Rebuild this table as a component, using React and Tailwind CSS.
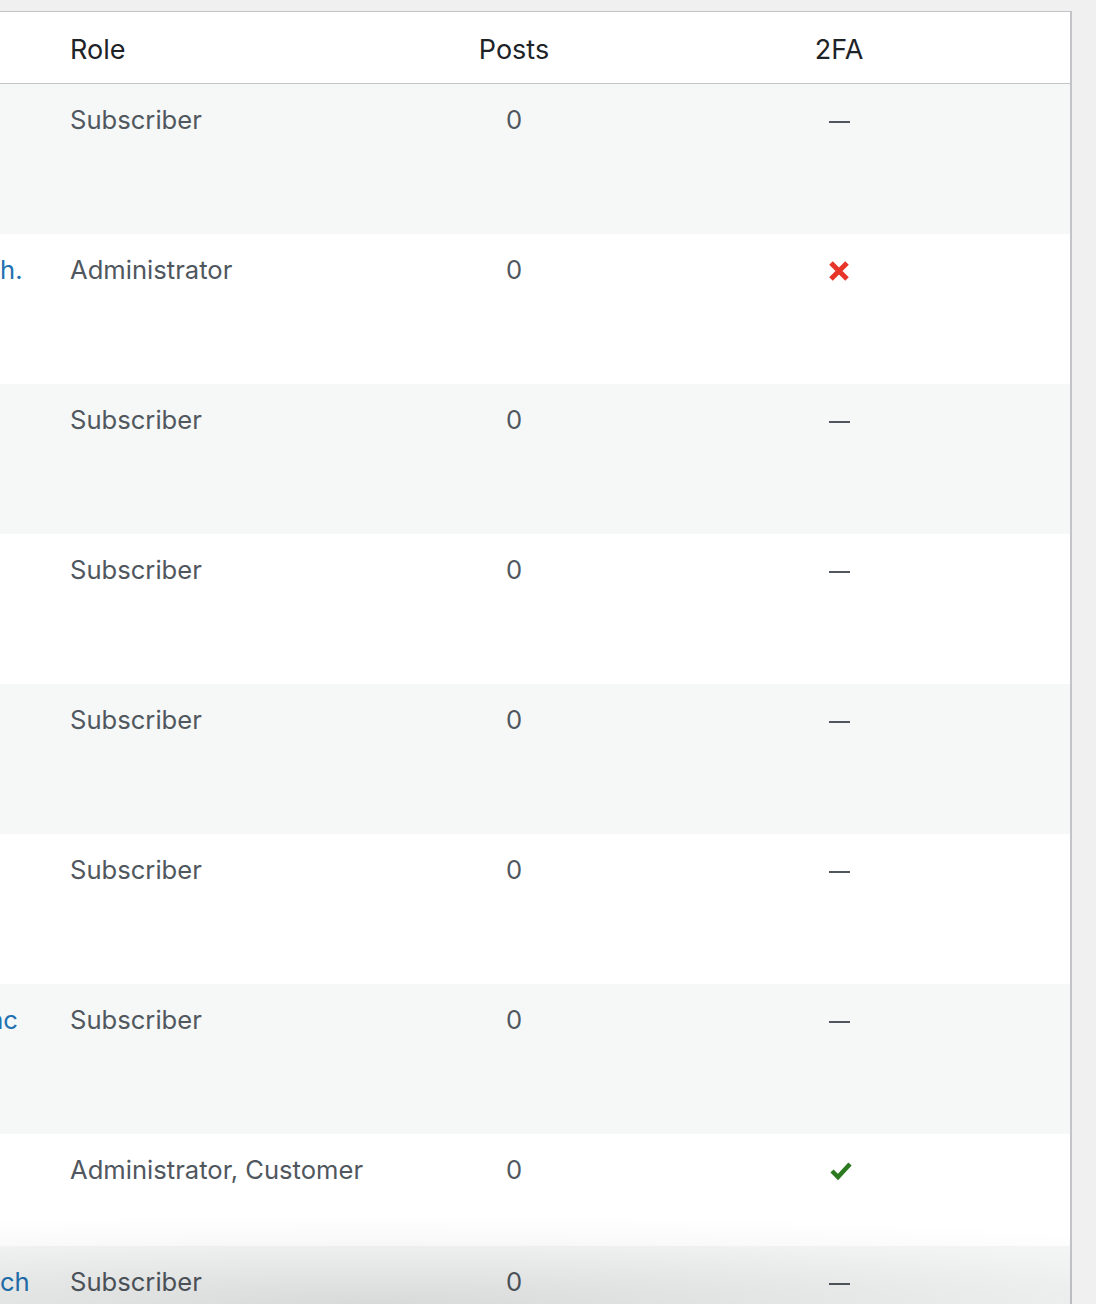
import React from 'react';

const rows = [
  { name: '', role: 'Subscriber', posts: '0', tfa: 'none', h: 'h-[150px]' },
  { name: 'h.', role: 'Administrator', posts: '0', tfa: 'off', h: 'h-[150px]' },
  { name: '', role: 'Subscriber', posts: '0', tfa: 'none', h: 'h-[150px]' },
  { name: '', role: 'Subscriber', posts: '0', tfa: 'none', h: 'h-[150px]' },
  { name: '', role: 'Subscriber', posts: '0', tfa: 'none', h: 'h-[150px]' },
  { name: '', role: 'Subscriber', posts: '0', tfa: 'none', h: 'h-[150px]' },
  { name: 'ac', shift: true, role: 'Subscriber', posts: '0', tfa: 'none', h: 'h-[150px]' },
  { name: '', role: 'Administrator, Customer', posts: '0', tfa: 'on', h: 'h-[112px]' },
  { name: 'ch', role: 'Subscriber', posts: '0', tfa: 'none', h: 'h-[150px]' }
];

function TwoFA({ state }) {
  if (state === 'off') {
    return (
      <svg width="22" height="22" viewBox="0 0 22 22" className="inline-block align-middle -mt-[3px]">
        <path d="M3 3 L19 19 M19 3 L3 19" stroke="#e8352a" strokeWidth="5" strokeLinecap="butt" />
      </svg>
    );
  }
  if (state === 'on') {
    return (
      <svg width="22" height="20" viewBox="0 0 22 20" className="inline-block align-middle -mt-[3px] ml-[3px]">
        <path d="M2 10 L8 16 L20 3" stroke="#2c7a1f" strokeWidth="4.5" fill="none" />
      </svg>
    );
  }
  return <span className="inline-block w-[21px] h-[2px] bg-[#50575e] align-middle -mt-[1px]" aria-hidden="true" />;
}

export default function App() {
  return (
    <div className="relative h-[1304px] overflow-hidden bg-[#f0f0f1] pt-[11px] font-['Inter',sans-serif]">
      <div className="w-[1072px] border-t border-r-2 border-[#c3c4c7] bg-white">
        {/* header */}
        <div className="flex h-[72px] border-b border-[#c3c4c7] text-[27px] leading-[39px] text-[#1d2327]">
          <div className="w-[54px]" />
          <div className="w-[374px] px-[16px] pt-[18px]">Role</div>
          <div className="w-[172px] pt-[18px] text-center">Posts</div>
          <div className="flex-1 pl-[8px] pt-[18px] text-center">2FA</div>
        </div>

        {rows.map((row, i) => (
          <div
            key={i}
            className={`flex ${row.h} text-[25.6px] leading-[39px] text-[#50575e] ${i % 2 === 0 ? 'bg-[#f6f7f7]' : 'bg-white'}`}
          >
            <div className="w-[54px] overflow-hidden pt-[16px]">
              <span className={`block whitespace-nowrap text-[#2271b1] ${row.shift ? '-ml-[11px]' : ''}`}>
                {row.name}
              </span>
            </div>
            <div className="w-[374px] px-[16px] pt-[16px] whitespace-nowrap">{row.role}</div>
            <div className="w-[172px] pt-[16px] text-center">{row.posts}</div>
            <div className="flex-1 pl-[8px] pt-[16px] text-center">
              <TwoFA state={row.tfa} />
            </div>
          </div>
        ))}
      </div>

      {/* soft shadow along the bottom edge */}
      <div className="pointer-events-none absolute bottom-0 left-0 h-[100px] w-[1072px] bg-[radial-gradient(ellipse_1150px_90px_at_35%_100%,rgba(0,0,0,0.12),rgba(0,0,0,0.02)_75%,transparent)]" />
    </div>
  );
}
